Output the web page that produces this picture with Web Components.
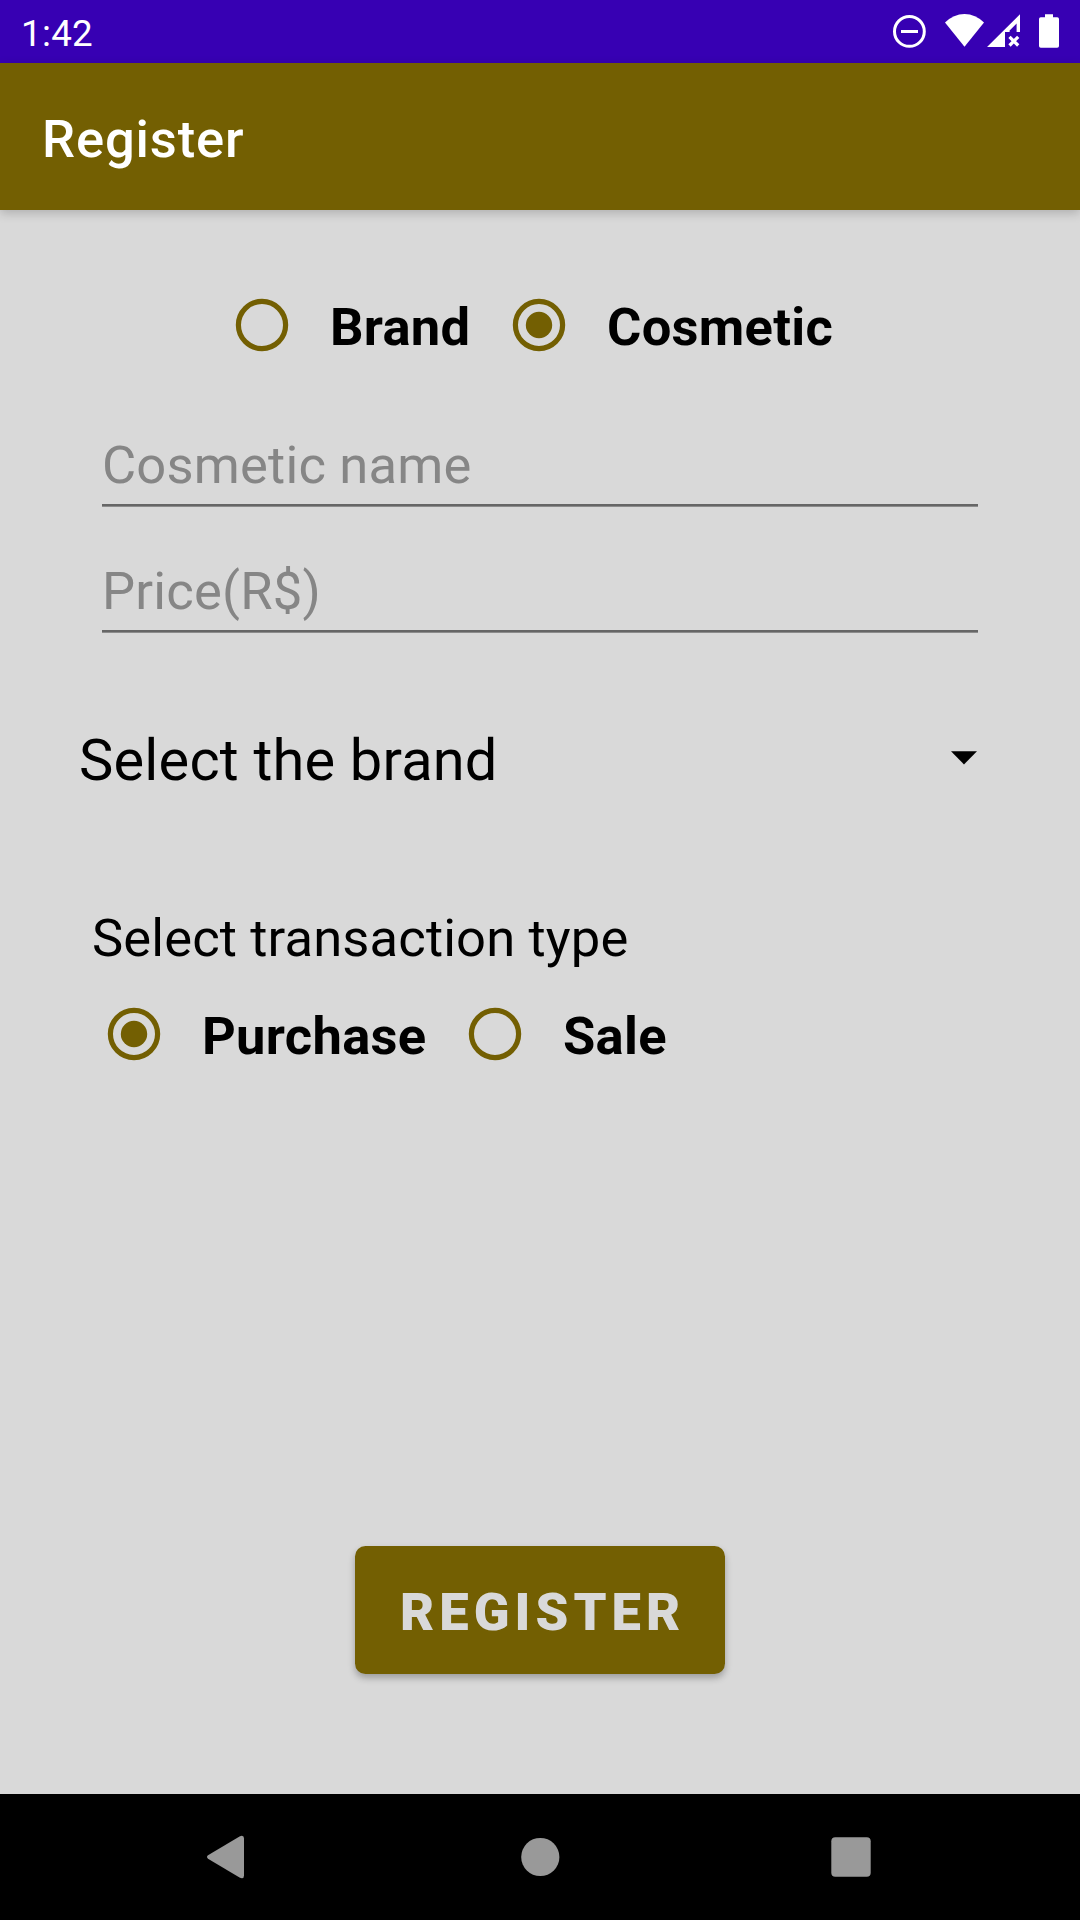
<!DOCTYPE html>
<html lang="en">
<head>
<meta charset="utf-8">
<title>Register</title>
<style>
html,body{margin:0;padding:0;background:#d9d9d9}
body{font-family:Roboto,sans-serif;width:1080px;height:1920px;overflow:hidden}
</style>
</head>
<body>
<register-screen></register-screen>
<script>
const define = (name, html) => {
  const t = document.createElement('template');
  t.innerHTML = html;
  customElements.define(name, class extends HTMLElement {
    constructor() {
      super();
      this.attachShadow({ mode: 'open' }).appendChild(t.content.cloneNode(true));
    }
  });
};

define('status-bar', `
<style>
:host{display:flex;justify-content:space-between;height:63px;background:#3700b3;color:#fff;box-sizing:border-box;padding:0 20px 0 21px}
.time{font-size:36.75px;line-height:68px;letter-spacing:.3px}
.icons{display:flex;align-items:flex-start}
svg{display:block;fill:#fff}
svg + svg{margin-left:var(--gap,0)}
</style>
<span class="time"><slot></slot></span>
<span class="icons">
<svg width="36" height="63" viewBox="892 0 36 63"><circle cx="909.4" cy="31.4" r="14.9" fill="none" stroke="#fff" stroke-width="3"/><rect x="901" y="30" width="17" height="3"/></svg>
<svg style="--gap:17px" width="39" height="63" viewBox="945 0 39 63"><path d="M964.5 46.7L945 22.6Q953.5 14 964.5 14T984 22.6Z"/></svg>
<svg style="--gap:3px" width="34" height="63" viewBox="987 0 34 63"><path d="M987 47L1020 14.3V32H1016.6V23.4L1009.6 30.6V32H1005V47Z"/><path d="M1009.5 36.8L1018.2 45.5M1018.2 36.8L1009.5 45.5" stroke="#fff" stroke-width="3.2"/></svg>
<svg style="--gap:18px" width="21" height="63" viewBox="1039 0 21 63"><path d="M1045 17.3V14.3H1053V17.3H1057.2Q1059 17.3 1059 19.1V46Q1059 47.8 1057.2 47.8H1040.8Q1039 47.8 1039 46V19.1Q1039 17.3 1040.8 17.3Z"/></svg>
</span>`);

define('app-bar', `
<style>
:host{display:block;height:147px;box-sizing:border-box;padding:5px 42px 0;background:#735f02;color:#fff;font-size:52.5px;font-weight:500;line-height:142px;letter-spacing:.87px;box-shadow:0 3px 10px rgba(0,0,0,.2)}
</style><slot></slot>`);

define('radio-option', `
<style>
:host{display:flex;align-items:center;height:84px;font-size:52.5px;font-weight:700;letter-spacing:.28px;color:#000}
svg{display:block;margin:0 36px 0 10px;flex:none}
.dot{display:none}
:host([checked]) .dot{display:block}
span{line-height:62px;padding-top:4px;white-space:nowrap}
</style>
<svg width="64" height="84" viewBox="0 0 64 84"><circle cx="32" cy="42" r="23.6" fill="none" stroke="#735f02" stroke-width="5.2"/><circle class="dot" cx="32" cy="42" r="13.2" fill="#735f02"/></svg>
<span><slot></slot></span>`);

define('text-field', `
<style>
:host{display:block;height:72px;box-sizing:border-box;font-size:52.5px;line-height:60px;letter-spacing:.2px;color:#868686;background:linear-gradient(#666 0 2px,#8c8c8c 2px 3px) bottom/100% 3px no-repeat}
</style><slot></slot>`);

define('drop-down', `
<style>
:host{display:flex;align-items:center;justify-content:space-between;height:84px;font-size:57.75px;line-height:84px;letter-spacing:.2px;color:#000}
svg{display:block}
</style>
<span><slot></slot></span>
<svg width="26" height="18" viewBox="0 0 26 18"><path d="M0 .3H26L13 13.4Z"/></svg>`);

define('action-button', `
<style>
:host{display:block}
button{display:block;width:370px;height:128px;margin:0;border:0;padding:0 0 2px 45px;text-align:left;border-radius:10.5px;background:#735f02;color:#d9d9d9;font:900 52.5px/132px Roboto,sans-serif;letter-spacing:5.05px;box-shadow:0 4px 7px rgba(0,0,0,.28)}
span{display:block;height:126px}
</style><button><span><slot></slot></span></button>`);

define('nav-bar', `
<style>
:host{display:flex;justify-content:space-between;align-items:center;height:126px;background:#000;padding:0 209px 0 206px}
svg{display:block;fill:#999;overflow:visible}
</style>
<svg width="40" height="44" viewBox="0 0 40 44"><path d="M2 20.3L33.5 1.4Q38 -.4 38 3.5V40.5Q38 44.4 33.5 42.6L2 23.7Q0 22 2 20.3Z"/></svg>
<svg width="40" height="40" viewBox="0 0 40 40"><circle cx="21.3" cy="20" r="19.1"/></svg>
<svg width="40" height="40" viewBox="0 0 40 40"><rect x=".3" y=".3" width="39.4" height="39.4" rx="4"/></svg>`);

define('register-screen', `
<style>
:host{display:flex;flex-direction:column;width:1080px;height:1920px;background:#d9d9d9}
main{flex:1;display:flex;flex-direction:column;min-height:0}
.kind{display:flex;margin:73px 0 0 220px}
.kind > :first-child{width:277px}
.fields{display:flex;flex-direction:column;gap:54px;margin:68px 102px 0}
drop-down{margin:85px 103px 0 79px}
.label{margin:106px 0 0 92px;font-size:52.5px;line-height:60px;letter-spacing:.14px;color:#000}
.type{display:flex;margin:24px 0 0 92px}
.type > :first-child{width:361px}
action-button{margin:470px auto 0}
</style>
<status-bar>1:42</status-bar>
<app-bar>Register</app-bar>
<main>
<div class="kind"><radio-option>Brand</radio-option><radio-option checked>Cosmetic</radio-option></div>
<div class="fields"><text-field>Cosmetic name</text-field><text-field>Price(R$)</text-field></div>
<drop-down>Select the brand</drop-down>
<div class="label">Select transaction type</div>
<div class="type"><radio-option checked>Purchase</radio-option><radio-option>Sale</radio-option></div>
<action-button>REGISTER</action-button>
</main>
<nav-bar></nav-bar>`);
</script>
</body>
</html>
